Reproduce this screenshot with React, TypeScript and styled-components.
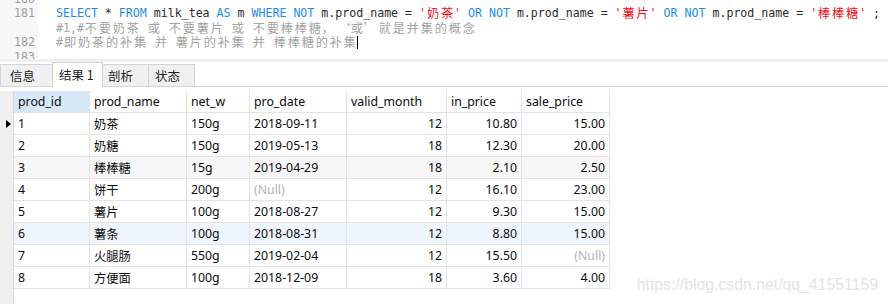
import React from "react";
import styled, { createGlobalStyle } from "styled-components";

const GlobalStyle = createGlobalStyle`
  html, body { margin: 0; padding: 0; background: #ffffff; }
  * { box-sizing: border-box; }
`;

const MONO = `"DejaVu Sans Mono", "Noto Sans CJK SC", monospace`;
const UI = `"Noto Sans", "Noto Sans CJK SC", sans-serif`;

const Page = styled.div`
  position: relative;
  width: 888px;
  height: 304px;
  overflow: hidden;
  background: #ffffff;
  font-family: ${UI};
`;

/* ---------- editor ---------- */
const Editor = styled.div`
  height: 59px;
  overflow: hidden;
  background: #ffffff;
`;

const EditorLines = styled.div`
  margin-top: -8.5px;
`;

const LineRow = styled.div`
  display: grid;
  grid-template-columns: 38px 1fr;
  height: 14.5px;
  line-height: 14.5px;
  font-family: ${MONO};
  font-size: 11.6px;
`;

const LineNo = styled.div`
  background: #f7f7f7;
  color: #9c9c9c;
  text-align: right;
  padding-right: 3px;
`;

const Code = styled.div`
  padding-left: 18px;
  white-space: pre;
  color: #2b2b2b;
`;

const Kw = styled.span`
  color: #1a8cf0;
`;

const Str = styled.span`
  color: #f50a14;
`;

const Comment = styled.span`
  color: #a3a3a3;
`;

const WideChar = styled.span<{ $align: string }>`
  display: inline-block;
  width: 14px;
  text-align: ${(p) => p.$align};
  font-family: "Noto Sans CJK SC", sans-serif;
  font-size: 12.2px;
  line-height: 14.5px;
  vertical-align: top;
`;

const Caret = styled.span`
  display: inline-block;
  width: 1px;
  height: 13px;
  background: #000;
  vertical-align: top;
  margin-top: 1px;
`;

const WIDE_RE = /[\u2e80-\u9fff\uff00-\uffef\u3000-\u303f\u2018\u2019]/;

function Mono({ text }: { text: string }) {
  const parts: React.ReactNode[] = [];
  let buf = "";
  Array.from(text).forEach((ch, i) => {
    if (WIDE_RE.test(ch)) {
      if (buf) {
        parts.push(buf);
        buf = "";
      }
      const align = ch === "\u2018" ? "right" : ch === "\u2019" || ch === "，" ? "left" : "center";
      parts.push(
        <WideChar key={i} $align={align}>
          {ch}
        </WideChar>
      );
    } else {
      buf += ch;
    }
  });
  if (buf) parts.push(buf);
  return <>{parts}</>;
}

const Separator = styled.div`
  height: 3px;
  background: #efefef;
`;

/* ---------- tabs ---------- */
const TabBar = styled.div`
  display: flex;
  align-items: flex-end;
  height: 25px;
  border-bottom: 1px solid #d6d6d6;
  background: #ffffff;
`;

const Tab = styled.div<{ $active?: boolean; $w: number; $pl: number }>`
  width: ${(p) => p.$w}px;
  height: ${(p) => (p.$active ? 25 : 22)}px;
  margin-bottom: ${(p) => (p.$active ? -1 : 0)}px;
  margin-right: -1px;
  padding-left: ${(p) => p.$pl}px;
  padding-bottom: ${(p) => (p.$active ? 2 : 0)}px;
  display: flex;
  align-items: center;
  border: 1px solid #d4d4d4;
  border-bottom: none;
  background: ${(p) => (p.$active ? "#ffffff" : "#f0f0f0")};
  color: #1e1e1e;
  font-family: "Noto Sans CJK SC", sans-serif;
  font-size: 12.5px;
  position: relative;
  z-index: ${(p) => (p.$active ? 1 : 0)};
`;

/* ---------- grid ---------- */
const GridArea = styled.div`
  display: flex;
  margin-top: 4px;
  height: 213px;
`;

const RowHeaderStrip = styled.div`
  width: 14px;
  flex: none;
  background: #f0f0f0;
  border-right: 1px solid #dadada;
  display: flex;
  flex-direction: column;
`;

const RowMarker = styled.div`
  height: 22px;
  display: flex;
  align-items: center;
  padding-left: 6px;
`;

const Table = styled.div`
  display: grid;
  grid-template-columns: 76px 97px 63px 97px 100px 75px 88px;
  grid-auto-rows: 22px;
  align-content: start;
`;

const Cell = styled.div<{ $right?: boolean; $bg?: string }>`
  height: 22px;
  display: flex;
  align-items: center;
  justify-content: ${(p) => (p.$right ? "flex-end" : "flex-start")};
  padding: 0 4px;
  border-right: 1px solid #e4e4e4;
  border-bottom: 1px solid #e4e4e4;
  background: ${(p) => p.$bg || "#ffffff"};
  color: #0a0a0a;
  font-size: 12.3px;
  white-space: nowrap;
`;

const Null = styled.span`
  color: #b3b3b3;
`;

const Watermark = styled.div`
  position: absolute;
  right: 10px;
  top: 276px;
  font-family: "Liberation Sans", Arial, sans-serif;
  font-size: 15.8px;
  color: #e4e4e4;
  white-space: nowrap;
`;

type Row = {
  id: string;
  name: string;
  w: string;
  date: string | null;
  month: string;
  inP: string;
  sale: string | null;
};

const rows: Row[] = [
  { id: "1", name: "奶茶", w: "150g", date: "2018-09-11", month: "12", inP: "10.80", sale: "15.00" },
  { id: "2", name: "奶糖", w: "150g", date: "2019-05-13", month: "18", inP: "12.30", sale: "20.00" },
  { id: "3", name: "棒棒糖", w: "15g", date: "2019-04-29", month: "18", inP: "2.10", sale: "2.50" },
  { id: "4", name: "饼干", w: "200g", date: null, month: "12", inP: "16.10", sale: "23.00" },
  { id: "5", name: "薯片", w: "100g", date: "2018-08-27", month: "12", inP: "9.30", sale: "15.00" },
  { id: "6", name: "薯条", w: "100g", date: "2018-08-31", month: "12", inP: "8.80", sale: "15.00" },
  { id: "7", name: "火腿肠", w: "550g", date: "2019-02-04", month: "12", inP: "15.50", sale: null },
  { id: "8", name: "方便面", w: "100g", date: "2018-12-09", month: "18", inP: "3.60", sale: "4.00" },
];

const rowBg = (i: number) => (i === 2 ? "#f7f7f7" : i === 5 ? "#eff5fc" : undefined);

const headers = ["prod_id", "prod_name", "net_w", "pro_date", "valid_month", "in_price", "sale_price"];

function Marker() {
  return (
    <svg width="5" height="8" viewBox="0 0 5 8">
      <polygon points="0,0 5,4 0,8" fill="#000" />
    </svg>
  );
}

export default function App() {
  const cond = (s: string) => (
    <>
      <Kw>NOT</Kw> m.prod_name = <Str><Mono text={s} /></Str>
    </>
  );
  return (
    <Page>
      <GlobalStyle />
      <Editor>
        <EditorLines>
          <LineRow>
            <LineNo>180</LineNo>
            <Code />
          </LineRow>
          <LineRow>
            <LineNo>181</LineNo>
            <Code>
              <Kw>SELECT</Kw> * <Kw>FROM</Kw> milk_tea <Kw>AS</Kw> m <Kw>WHERE</Kw> {cond("'奶茶'")} <Kw>OR</Kw>{" "}
              {cond("'薯片'")} <Kw>OR</Kw> {cond("'棒棒糖'")} ;
            </Code>
          </LineRow>
          <LineRow>
            <LineNo />
            <Code>
              <Comment>
                <Mono text="#1,#不要奶茶 或 不要薯片 或 不要棒棒糖，‘或’就是并集的概念" />
              </Comment>
            </Code>
          </LineRow>
          <LineRow>
            <LineNo>182</LineNo>
            <Code>
              <Comment>
                <Mono text="#即奶茶的补集 并 薯片的补集 并 棒棒糖的补集" />
              </Comment>
              <Caret />
            </Code>
          </LineRow>
          <LineRow>
            <LineNo>183</LineNo>
            <Code />
          </LineRow>
        </EditorLines>
      </Editor>
      <Separator />
      <TabBar>
        <Tab $w={53} $pl={9}>信息</Tab>
        <Tab $w={51} $pl={6} $active>结果 1</Tab>
        <Tab $w={47} $pl={5}>剖析</Tab>
        <Tab $w={47} $pl={6}>状态</Tab>
      </TabBar>
      <GridArea>
        <RowHeaderStrip>
          <RowMarker />
          {rows.map((r, i) => (
            <RowMarker key={r.id}>{i === 0 ? <Marker /> : null}</RowMarker>
          ))}
        </RowHeaderStrip>
        <Table>
          {headers.map((h, i) => (
            <Cell key={h} $bg={i === 0 ? "#d7e9f8" : undefined}>
              {h}
            </Cell>
          ))}
          {rows.map((r, i) => {
            const bg = rowBg(i);
            return (
              <React.Fragment key={r.id}>
                <Cell $bg={bg}>{r.id}</Cell>
                <Cell $bg={bg}>{r.name}</Cell>
                <Cell $bg={bg}>{r.w}</Cell>
                <Cell $bg={bg}>{r.date ?? <Null>(Null)</Null>}</Cell>
                <Cell $bg={bg} $right>{r.month}</Cell>
                <Cell $bg={bg} $right>{r.inP}</Cell>
                <Cell $bg={bg} $right>{r.sale ?? <Null>(Null)</Null>}</Cell>
              </React.Fragment>
            );
          })}
        </Table>
      </GridArea>
      <Watermark>https://blog.csdn.net/qq_41551159</Watermark>
    </Page>
  );
}
